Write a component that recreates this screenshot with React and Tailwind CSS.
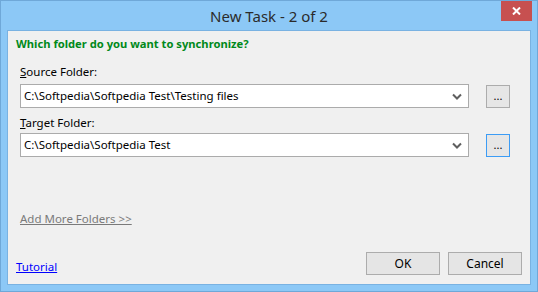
import React from 'react';

const font = { fontFamily: '"Noto Sans", "Open Sans", Arial, sans-serif' };

const Chevron = () => (
  <svg width="10" height="7" viewBox="0 0 10 7" className="shrink-0">
    <path d="M1 1.5 L5 5.5 L9 1.5" fill="none" stroke="#5f5f5f" strokeWidth="2" />
  </svg>
);

const FolderRow = ({ value, active }) => (
  <div className="flex items-center">
    <div className="ml-[12px] w-[449px] h-[24px] bg-white border border-[#ababab] flex items-center pl-[3px] pr-[6px]">
      <span className="flex-1 text-[11.5px] text-black leading-[16px] whitespace-nowrap">{value}</span>
      <Chevron />
    </div>
    <button
      className={`ml-[17px] w-[24px] h-[23px] bg-[#e6e6e6] border ${active ? 'border-[#3c9cf5]' : 'border-[#acacac]'} text-[11px] leading-none text-black flex items-center justify-center pb-[2px]`}
    >
      ...
    </button>
  </div>
);

const DialogButton = ({ children }) => (
  <button className="w-[74px] h-[23px] bg-[#e5e5e5] border border-[#acacac] text-[12px] text-black leading-none">
    {children}
  </button>
);

export default function App() {
  return (
    <div
      className="w-[538px] h-[292px] bg-[#8cc8f6] border border-[#6fa8d8] flex flex-col overflow-hidden"
      style={font}
    >
      {/* Title bar */}
      <div className="relative h-[29px] shrink-0 flex items-center justify-center">
        <span className="text-[15px] text-[#2b2b2b] leading-none pt-[2px]">New Task - 2 of 2</span>
        <div className="absolute top-0 right-[5px] w-[31px] h-[20px] bg-[#c75050] flex items-center justify-center">
          <svg width="9" height="8" viewBox="0 0 9 8">
            <path d="M1 0.5 L8 7.5 M8 0.5 L1 7.5" stroke="white" strokeWidth="2" />
          </svg>
        </div>
      </div>

      {/* Client area */}
      <div className="flex-1 mx-[6px] mb-[6px] bg-[#f0f0f0] border border-[#79b2e2] flex flex-col">
        <div className="pl-[8px] mt-[6px] text-[11.2px] font-bold text-[#00891a] leading-[14px] whitespace-nowrap">
          Which folder do you want to synchronize?
        </div>

        <div className="pl-[12px] mt-[14px] text-[11.5px] text-black leading-[14px]">
          <span className="underline">S</span>ource Folder:
        </div>
        <div className="mt-[5px]">
          <FolderRow value="C:\Softpedia\Softpedia Test\Testing files" />
        </div>

        <div className="pl-[12px] mt-[8px] text-[11.5px] text-black leading-[14px]">
          <span className="underline">T</span>arget Folder:
        </div>
        <div className="mt-[3px]">
          <FolderRow value="C:\Softpedia\Softpedia Test" active />
        </div>

        <div className="pl-[12px] mt-[55px] text-[11.5px] text-[#7a7a7a] underline leading-[14px]">
          Add More Folders &gt;&gt;
        </div>

        <div className="mt-auto mb-[9px] flex items-end">
          <span className="pl-[8px] pb-[1px] text-[11.5px] text-[#0000ff] underline leading-[14px]">Tutorial</span>
          <div className="ml-auto mr-[8px] flex gap-[8px]">
            <DialogButton>OK</DialogButton>
            <DialogButton>Cancel</DialogButton>
          </div>
        </div>
      </div>
    </div>
  );
}
